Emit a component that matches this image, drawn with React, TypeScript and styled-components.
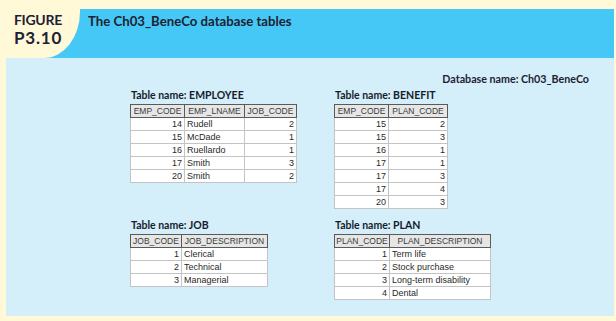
import React from "react";
import styled, { createGlobalStyle } from "styled-components";

const GlobalStyle = createGlobalStyle`
  html, body {
    margin: 0;
    padding: 0;
    background: #fff9d8;
  }
  body {
    font-family: "Liberation Sans", Arial, sans-serif;
  }
`;

const Frame = styled.div`
  margin: 9px 2px 0 6px;
  width: 608px;
`;

const TopBar = styled.header`
  display: flex;
  height: 49px;
  background: #45c8f5;
`;

const FigureTag = styled.div`
  width: 74px;
  flex: none;
  background: #fff9d8;
  border-bottom-right-radius: 36px 46px;
  padding: 3px 0 0 8px;
  box-sizing: border-box;
  font-family: Lato, "Open Sans", sans-serif;
  font-weight: 700;
  color: #1d2233;
`;

const FigureWord = styled.div`
  font-size: 14px;
  line-height: 16px;
  letter-spacing: -0.3px;
`;

const FigureNumber = styled.div`
  font-size: 17px;
  line-height: 18px;
  letter-spacing: 0.8px;
  margin-top: 1px;
`;

const Title = styled.h1`
  margin: 0;
  padding: 4px 0 0 8px;
  font-family: Lato, "Open Sans", sans-serif;
  font-size: 13.2px;
  line-height: 16px;
  font-weight: 700;
  color: #1d2233;
`;

const Panel = styled.main`
  height: 258px;
  background: #d4eefa;
  padding: 14px 25px 0 124px;
  box-sizing: border-box;
`;

const DbName = styled.div`
  text-align: right;
  font-family: Lato, "Open Sans", sans-serif;
  font-weight: 700;
  font-size: 10.7px;
  line-height: 14px;
  color: #1d2233;
`;

const Grid = styled.div`
  display: grid;
  grid-template-columns: 204px auto;
  row-gap: 9px;
  margin-top: 2px;
  align-items: start;
`;

const Block = styled.section``;

const Caption = styled.div`
  font-family: Lato, "Open Sans", sans-serif;
  font-weight: 700;
  font-size: 10.5px;
  line-height: 14px;
  color: #161c2c;
  margin-bottom: 2px;
  padding-left: 1px;
`;

const Table = styled.table<{ $darkLeft?: boolean }>`
  border-collapse: collapse;
  table-layout: fixed;
  background: #ffffff;
  font-family: "Liberation Sans", Arial, sans-serif;
  font-size: 9px;
  color: #2a2a2a;
  border-left: 1px solid ${(p) => (p.$darkLeft ? "#555" : "#b8b8b8")};
`;

const Head = styled.th`
  height: 12px;
  padding: 0;
  background: #e6e6e6;
  border: 1px solid #5a5a5a;
  font-size: 8.5px;
  font-weight: 400;
  text-align: center;
  color: #3a3a3a;
  white-space: nowrap;
  overflow: hidden;
`;

const Cell = styled.td<{ $num?: boolean }>`
  height: 12px;
  padding: 0 2px;
  border: 1px solid #c4c4c4;
  text-align: ${(p) => (p.$num ? "right" : "left")};
  white-space: nowrap;
  overflow: hidden;
`;

type Column = { name: string; width: number; num?: boolean };

type DataTable = {
  name: string;
  columns: Column[];
  rows: (string | number)[][];
  darkLeft?: boolean;
};

const employee: DataTable = {
  name: "EMPLOYEE",
  columns: [
    { name: "EMP_CODE", width: 54, num: true },
    { name: "EMP_LNAME", width: 60 },
    { name: "JOB_CODE", width: 52, num: true },
  ],
  rows: [
    [14, "Rudell", 2],
    [15, "McDade", 1],
    [16, "Ruellardo", 1],
    [17, "Smith", 3],
    [20, "Smith", 2],
  ],
};

const benefit: DataTable = {
  name: "BENEFIT",
  darkLeft: true,
  columns: [
    { name: "EMP_CODE", width: 54, num: true },
    { name: "PLAN_CODE", width: 59, num: true },
  ],
  rows: [
    [15, 2],
    [15, 3],
    [16, 1],
    [17, 1],
    [17, 3],
    [17, 4],
    [20, 3],
  ],
};

const job: DataTable = {
  name: "JOB",
  columns: [
    { name: "JOB_CODE", width: 51, num: true },
    { name: "JOB_DESCRIPTION", width: 86 },
  ],
  rows: [
    [1, "Clerical"],
    [2, "Technical"],
    [3, "Managerial"],
  ],
};

const plan: DataTable = {
  name: "PLAN",
  columns: [
    { name: "PLAN_CODE", width: 55, num: true },
    { name: "PLAN_DESCRIPTION", width: 101 },
  ],
  rows: [
    [1, "Term life"],
    [2, "Stock purchase"],
    [3, "Long-term disability"],
    [4, "Dental"],
  ],
};

const TableBlock: React.FC<{ data: DataTable }> = ({ data }) => {
  const total = data.columns.reduce((s, c) => s + c.width, 0);
  return (
    <Block>
      <Caption>Table name: {data.name}</Caption>
      <Table $darkLeft={data.darkLeft} style={{ width: total }}>
        <colgroup>
          {data.columns.map((c) => (
            <col key={c.name} style={{ width: c.width }} />
          ))}
        </colgroup>
        <thead>
          <tr>
            {data.columns.map((c) => (
              <Head key={c.name}>{c.name}</Head>
            ))}
          </tr>
        </thead>
        <tbody>
          {data.rows.map((row, i) => (
            <tr key={i}>
              {row.map((v, j) => (
                <Cell key={j} $num={data.columns[j].num}>
                  {v}
                </Cell>
              ))}
            </tr>
          ))}
        </tbody>
      </Table>
    </Block>
  );
};

const App: React.FC = () => {
  return (
    <>
      <GlobalStyle />
      <Frame>
        <TopBar>
          <FigureTag>
            <FigureWord>FIGURE</FigureWord>
            <FigureNumber>P3.10</FigureNumber>
          </FigureTag>
          <Title>The Ch03_BeneCo database tables</Title>
        </TopBar>
        <Panel>
          <DbName>Database name: Ch03_BeneCo</DbName>
          <Grid>
            <TableBlock data={employee} />
            <TableBlock data={benefit} />
            <TableBlock data={job} />
            <TableBlock data={plan} />
          </Grid>
        </Panel>
      </Frame>
    </>
  );
};

export default App;
